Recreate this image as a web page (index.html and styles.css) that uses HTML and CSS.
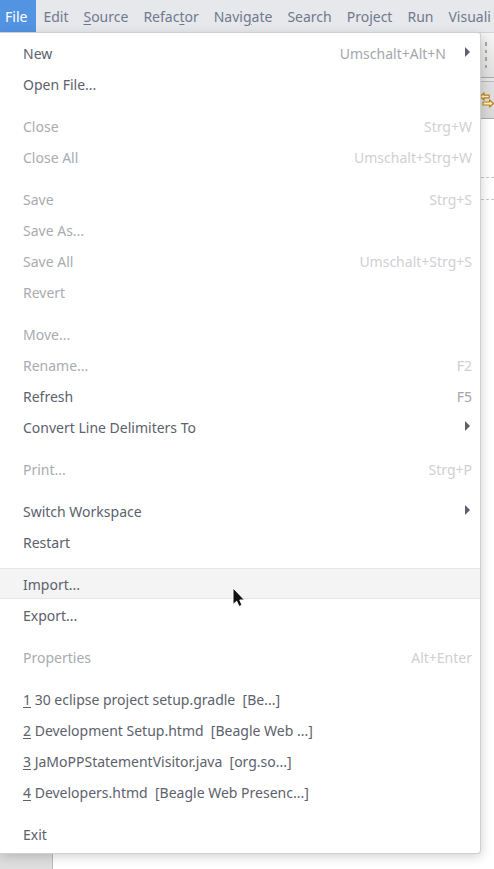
FILE: index.html
```html
<!DOCTYPE html>
<html lang="en">
<head>
<meta charset="utf-8">
<title>Eclipse</title>
<link rel="stylesheet" href="styles.css">
</head>
<body>
<nav class="menubar" aria-label="Main menu">
<button class="top active">File</button><button class="top">Edit</button><button class="top"><u>S</u>ource</button><button class="top">Refac<u>t</u>or</button><button class="top">Navi<u>g</u>ate</button><button class="top">Search</button><button class="top">Project</button><button class="top">Run</button><button class="top">Visuali</button>
</nav>
<main class="workbench">
  <div class="toolbar"><span class="handle"><i></i><i></i><i></i><i></i></span></div>
  <div class="tabs">
    <svg class="sync" width="14" height="16" viewBox="0 0 14 16" aria-hidden="true"><g fill="#fff3c9" stroke="#bf8318" stroke-width="1.2" stroke-linejoin="round"><path d="M0.2 4.5 4 1V3.2H9.2V5.8H4V8Z"/><path d="M13.4 11.5 9.5 8V10H3V13H9.5V15Z"/></g></svg>
  </div>
  <div class="editor">
    <div class="rules"></div>
    <div class="side"></div>
  </div>
</main>
<div class="menu" role="menu">
  <button class="item" role="menuitem"><span>New</span><kbd class="sub">Umschalt+Alt+N</kbd><svg class="arrow" viewBox="0 0 5 10" aria-hidden="true"><path d="M0 0 5 5 0 10Z"/></svg></button>
  <button class="item" role="menuitem"><span>Open File...</span></button>
  <hr>
  <button class="item" role="menuitem" disabled><span>Close</span><kbd>Strg+W</kbd></button>
  <button class="item" role="menuitem" disabled><span>Close All</span><kbd>Umschalt+Strg+W</kbd></button>
  <hr>
  <button class="item" role="menuitem" disabled><span>Save</span><kbd>Strg+S</kbd></button>
  <button class="item" role="menuitem" disabled><span>Save As...</span></button>
  <button class="item" role="menuitem" disabled><span>Save All</span><kbd>Umschalt+Strg+S</kbd></button>
  <button class="item" role="menuitem" disabled><span>Revert</span></button>
  <hr>
  <button class="item" role="menuitem" disabled><span>Move...</span></button>
  <button class="item" role="menuitem" disabled><span>Rename...</span><kbd>F2</kbd></button>
  <button class="item" role="menuitem"><span>Refresh</span><kbd>F5</kbd></button>
  <button class="item" role="menuitem"><span>Convert Line Delimiters To</span><svg class="arrow" viewBox="0 0 5 10" aria-hidden="true"><path d="M0 0 5 5 0 10Z"/></svg></button>
  <hr>
  <button class="item" role="menuitem" disabled><span>Print...</span><kbd>Strg+P</kbd></button>
  <hr>
  <button class="item" role="menuitem"><span>Switch Workspace</span><svg class="arrow" viewBox="0 0 5 10" aria-hidden="true"><path d="M0 0 5 5 0 10Z"/></svg></button>
  <button class="item" role="menuitem"><span>Restart</span></button>
  <hr>
  <button class="item hover" role="menuitem"><span>Import...</span></button>
  <button class="item" role="menuitem"><span>Export...</span></button>
  <hr>
  <button class="item" role="menuitem" disabled><span>Properties</span><kbd>Alt+Enter</kbd></button>
  <hr>
  <button class="item" role="menuitem"><span><u>1</u> 30 eclipse project setup.gradle  [Be...]</span></button>
  <button class="item" role="menuitem"><span><u>2</u> Development Setup.htmd  [Beagle Web ...]</span></button>
  <button class="item" role="menuitem"><span><u>3</u> JaMoPPStatementVisitor.java  [org.so...]</span></button>
  <button class="item" role="menuitem"><span><u>4</u> Developers.htmd  [Beagle Web Presenc...]</span></button>
  <hr>
  <button class="item" role="menuitem"><span>Exit</span></button>
</div>
<svg class="cursor" width="14" height="22" viewBox="0 0 14 22" aria-hidden="true"><path d="M1 1V17.5L4.7 14.2 7 19.5 10 18.2 7.8 13H12.5Z" fill="#111" stroke="#fff" stroke-width="1"/></svg>
</body>
</html>
```
FILE: styles.css
```css
* {
  box-sizing: border-box;
}

body {
  margin: 0;
  min-height: 100vh;
  display: flex;
  flex-direction: column;
  position: relative;
  overflow: hidden;
  background: #fff;
  font-family: "Noto Sans", "Open Sans", sans-serif;
  font-size: 14px;
}

button {
  border: 0;
  margin: 0;
  background: none;
  font: inherit;
}

u {
  text-underline-offset: 2px;
}

.menubar {
  display: flex;
  height: 33px;
  overflow: hidden;
  background: #e7e8eb;
  border-bottom: 1px solid #d3d4d8;
}

.top {
  flex: none;
  padding: 2px 8px 0 7px;
  line-height: 30px;
  color: #70788d;
}

.top.active {
  padding-left: 5px;
  padding-right: 9px;
  color: #fff;
  background: #5294e2;
}

.workbench {
  flex: 1;
  display: flex;
  flex-direction: column;
}

.toolbar {
  display: flex;
  justify-content: flex-end;
  height: 45px;
  padding: 9px 7px;
  background: linear-gradient(#f5f5f5, #dedede);
  border-bottom: 1px solid #aaa;
}

.handle {
  display: flex;
  flex-direction: column;
  gap: 4px;
}

.handle i {
  width: 2px;
  height: 4px;
  background: #aaa89e;
}

.tabs {
  display: flex;
  justify-content: flex-end;
  height: 41px;
  padding-top: 14px;
  background: linear-gradient(#e6e6e6 3px, #bbb 3px, #bbb 4px, #e0e0e0 4px, #d8d8d8);
  border-bottom: 1px solid #aaa;
}

.editor {
  flex: 1;
  display: flex;
  flex-direction: column;
  padding-top: 58px;
}

.rules {
  height: 23px;
  border: dashed #c8c8c8;
  border-width: 1px 0;
}

.side {
  flex: 1;
  width: 53px;
  background: #dedede;
  border-right: 1px solid #bbb;
}

.menu {
  position: absolute;
  top: 33px;
  left: 0;
  right: 14px;
  padding: 4px 0;
  background: #fff;
  border-radius: 0 2px 3px 0;
  box-shadow: 0 0 0 1px #cfcfcf, 1px 3px 12px rgba(0, 0, 0, 0.2);
}

.item {
  display: flex;
  align-items: center;
  width: 100%;
  height: 31px;
  padding: 1px 8px 0 23px;
  color: #5c616c;
  text-align: left;
  white-space: pre;
}

.item:disabled {
  color: #a9abb0;
}

.item.hover {
  background: #f4f4f4;
  border: solid #e6e6e6;
  border-width: 1px 0;
}

kbd {
  margin-left: auto;
  font: inherit;
  color: #a4a6ac;
}

.item:disabled kbd {
  color: #cfd0d3;
}

.arrow {
  width: 5px;
  height: 10px;
  margin: 0 2px 3px auto;
  fill: #5c616c;
}

.sub + .arrow {
  margin-left: 19px;
}

hr {
  height: 11px;
  margin: 0;
  border: 0;
}

.cursor {
  position: absolute;
  top: 587px;
  left: 232px;
}
```
